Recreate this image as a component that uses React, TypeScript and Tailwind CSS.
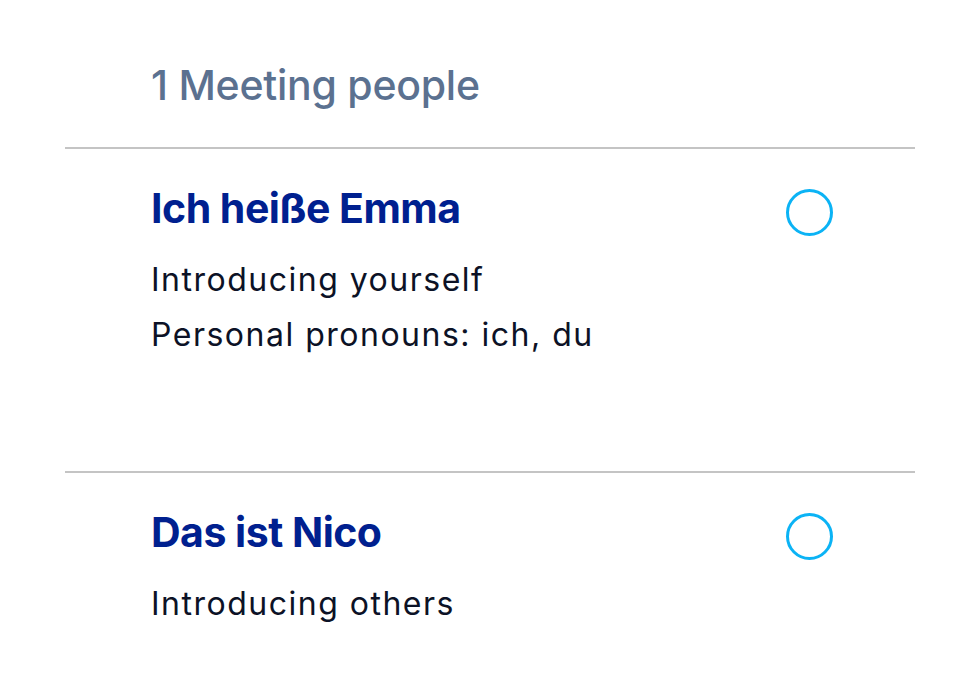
import React from 'react';

type Lesson = {
  title: string;
  topics: string[];
};

const lessons: Lesson[] = [
  { title: 'Ich heiße Emma', topics: ['Introducing yourself', 'Personal pronouns: ich, du'] },
  { title: 'Das ist Nico', topics: ['Introducing others'] },
];

function LessonRow({ lesson }: { lesson: Lesson }) {
  return (
    <div className="flex h-[324px] justify-between border-t-2 border-[#c4c4c4] pl-[86px] pr-[82px] pt-[39px]">
      <div>
        <h2 className="text-[41px] font-bold leading-none tracking-[-0.5px] text-[#00208f]">{lesson.title}</h2>
        <div className="mt-[23px]">
          {lesson.topics.map((t) => (
            <p key={t} className="text-[32px] leading-[55px] tracking-[1.5px] text-[#0c1226]">
              {t}
            </p>
          ))}
        </div>
      </div>
      <div className="mt-[1px] h-[47px] w-[47px] shrink-0 rounded-full border-[3px] border-[#0bb3f5]" />
    </div>
  );
}

export default function App() {
  return (
    <div className="h-[680px] w-[980px] overflow-hidden bg-white px-[65px] font-['Inter',sans-serif]">
      <div className="h-[147px] pl-[86px] pt-[65px]">
        <h1 className="text-[41px] font-medium leading-none tracking-[-0.25px] text-[#5b7190]">1 Meeting people</h1>
      </div>
      {lessons.map((l) => (
        <LessonRow key={l.title} lesson={l} />
      ))}
    </div>
  );
}
